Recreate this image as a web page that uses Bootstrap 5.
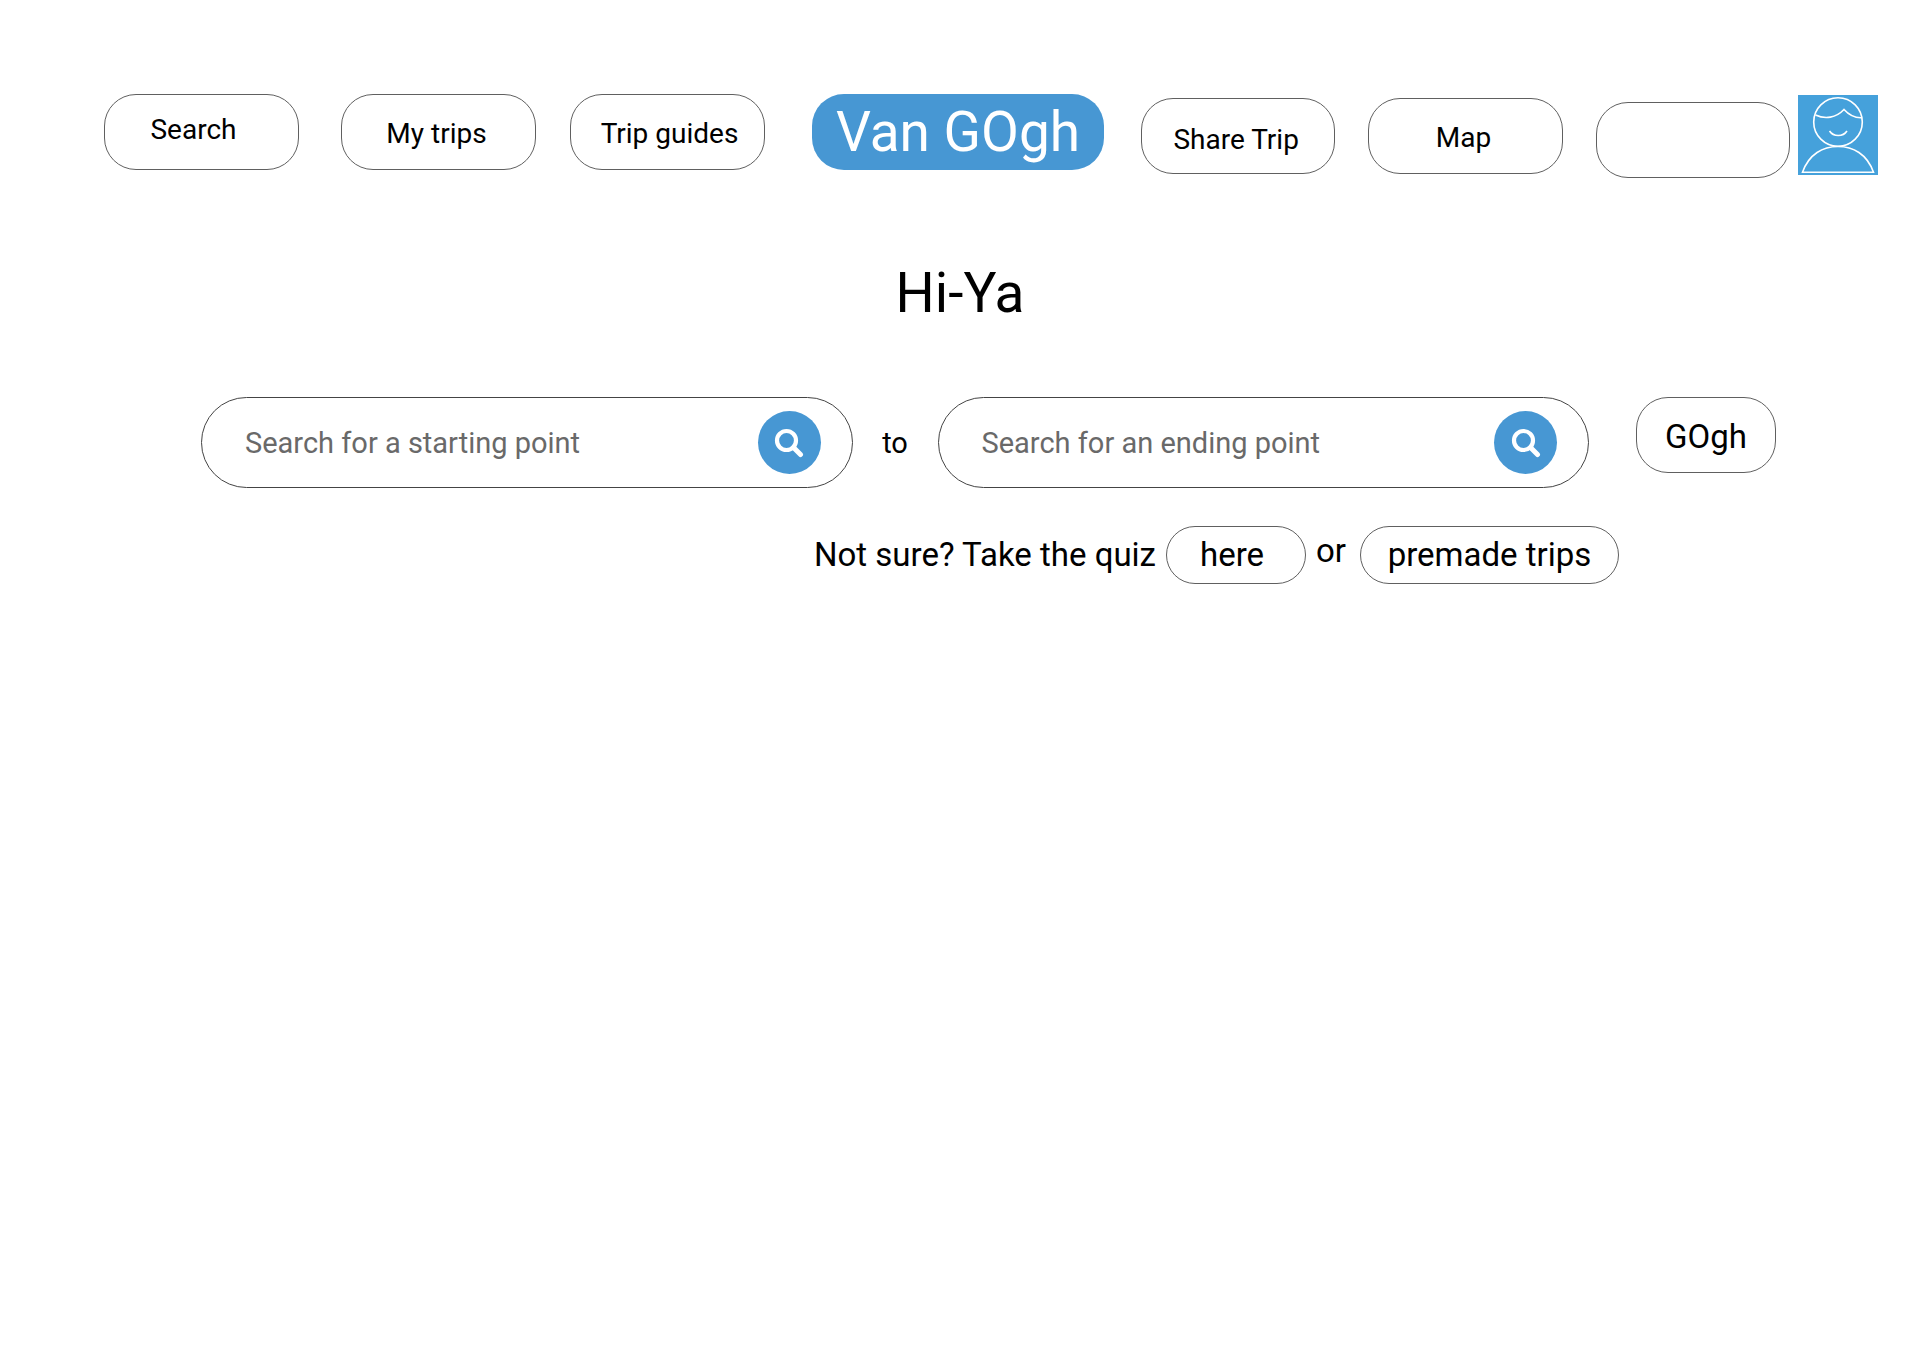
<!DOCTYPE html>
<html lang="en">
<head>
<meta charset="utf-8">
<meta name="viewport" content="width=device-width, initial-scale=1">
<title>Van GOgh</title>
<link href="https://cdn.jsdelivr.net/npm/bootstrap@5.3.0/dist/css/bootstrap.min.css" rel="stylesheet">
<style>
  body { font-family: Roboto, "Liberation Sans", sans-serif; color: #000; background: #fff; }
  .top-nav { padding: 94px 42px 0 104px; }
  .pill {
    height: 76px; border: 1px solid #606060; border-radius: 32px; background: #fff;
    color: #000; font-size: 28px; line-height: 32px; text-decoration: none; white-space: nowrap;
  }
  .pill:hover { background: #f3f8fc; }
  .nav-pill { flex: 1 1 195px; min-width: 140px; }
  .nav-left { flex: 661 1 0; gap: 34px; }
  .nav-right { flex: 649 1 0; gap: 33px; }
  .brand-pill { width: 292px; height: 76px; border-radius: 32px; background: #4797d3; color: #fff; font-size: 55px; line-height: 64px; text-decoration: none; margin: 0 37px 0 47px; }
  .avatar { width: 80px; height: 80px; margin-top: 1px; }
  .greeting { font-size: 55px; line-height: 64px; margin-top: 83px; font-weight: 400; }
  .planner { padding: 72px 144px 0 201px; }
  .field-pill { height: 91px; border: 1px solid #444; padding: 0 31px 0 41px; min-width: 260px; }
  .field-pill input { font-size: 29px; line-height: 34px; color: #000; outline: 0; min-width: 0; }
  .field-pill input::placeholder { color: #696969; opacity: 1; }
  .find-btn { width: 63px; height: 63px; background: #4797d3; }
  .to-word { width: 85px; font-size: 29px; line-height: 34px; }
  .go-pill { width: 140px; font-size: 33px; margin-left: 47px; }
  .quiz { padding: 38px 301px 0 201px; font-size: 33px; line-height: 38px; gap: 10px; }
  .small-pill { height: 58px; font-size: 33px; }
  .here-pill { width: 140px; }
  .trips-pill { width: 259px; }
</style>
<script src="https://cdn.jsdelivr.net/npm/bootstrap@5.3.0/dist/js/bootstrap.bundle.min.js" defer></script>
</head>
<body>
<header>
  <nav class="top-nav d-flex align-items-start" aria-label="Main">
    <div class="d-flex nav-left">
      <a href="#" class="pill nav-pill d-flex align-items-center justify-content-center pe-3 pb-1">Search</a>
      <a href="#" class="pill nav-pill d-flex align-items-center justify-content-center ms-2 pe-1 pt-1">My trips</a>
      <a href="#" class="pill nav-pill d-flex align-items-center justify-content-center ps-1 pt-1">Trip guides</a>
    </div>
    <a href="#" class="brand-pill d-flex align-items-center justify-content-center flex-shrink-0">Van GOgh</a>
    <div class="d-flex nav-right pt-1">
      <a href="#" class="pill nav-pill d-flex align-items-center justify-content-center pe-1 pt-2">Share Trip</a>
      <a href="#" class="pill nav-pill d-flex align-items-center justify-content-center pe-1 pt-1">Map</a>
      <button type="button" class="pill nav-pill mt-1" aria-label="Account"></button>
    </div>
    <a href="#" class="ms-2 flex-shrink-0 d-block avatar" aria-label="Profile">
      <svg class="d-block" width="80" height="80" viewBox="0 0 80 80" fill="none" stroke="#fff" stroke-width="1.6" aria-hidden="true">
        <rect width="80" height="80" fill="#45a1db" stroke="none"/>
        <circle cx="40" cy="27" r="24.3"/>
        <path d="M17.500 20C27 24.500 38 23 46 14.500C51 20 56 23 63.500 22.700M31.500 36C35.500 42 45 42 49 36"/>
        <path d="M4.500 77.300C11 59 25 51.500 40 51.500S69 59 75.500 77.300Z"/>
      </svg>
    </a>
  </nav>
</header>
<main>
  <h1 class="greeting text-center mb-0">Hi-Ya</h1>
  <form class="planner d-flex align-items-start">
    <div class="field-pill rounded-pill d-flex align-items-center flex-fill">
      <input type="text" class="border-0 bg-transparent flex-grow-1" placeholder="Search for a starting point" aria-label="Starting point">
      <button type="button" class="find-btn border-0 rounded-circle d-flex align-items-center justify-content-center flex-shrink-0 p-0" aria-label="Find starting point">
        <svg width="30" height="30" viewBox="0 0 30 30" fill="none" stroke="#fff" aria-hidden="true"><circle cx="12.500" cy="12.500" r="9.500" stroke-width="4.200"/><path d="M19.500 19.500L26.500 26.500" stroke-width="5" stroke-linecap="round"/></svg>
      </button>
    </div>
    <span class="to-word text-center align-self-center flex-shrink-0">to</span>
    <div class="field-pill rounded-pill d-flex align-items-center flex-fill">
      <input type="text" class="border-0 bg-transparent flex-grow-1" placeholder="Search for an ending point" aria-label="Ending point">
      <button type="button" class="find-btn border-0 rounded-circle d-flex align-items-center justify-content-center flex-shrink-0 p-0" aria-label="Find ending point">
        <svg width="30" height="30" viewBox="0 0 30 30" fill="none" stroke="#fff" aria-hidden="true"><circle cx="12.500" cy="12.500" r="9.500" stroke-width="4.200"/><path d="M19.500 19.500L26.500 26.500" stroke-width="5" stroke-linecap="round"/></svg>
      </button>
    </div>
    <button type="submit" class="pill go-pill flex-shrink-0 pt-1 pb-0">GOgh</button>
  </form>
  <div class="quiz d-flex align-items-center justify-content-end">
    <span>Not sure? Take the quiz</span>
    <a href="#" class="pill small-pill here-pill rounded-pill d-flex align-items-center justify-content-center pe-2">here</a>
    <span class="pb-2 me-1">or</span>
    <a href="#" class="pill small-pill trips-pill rounded-pill d-flex align-items-center justify-content-center">premade trips</a>
  </div>
</main>
</body>
</html>
